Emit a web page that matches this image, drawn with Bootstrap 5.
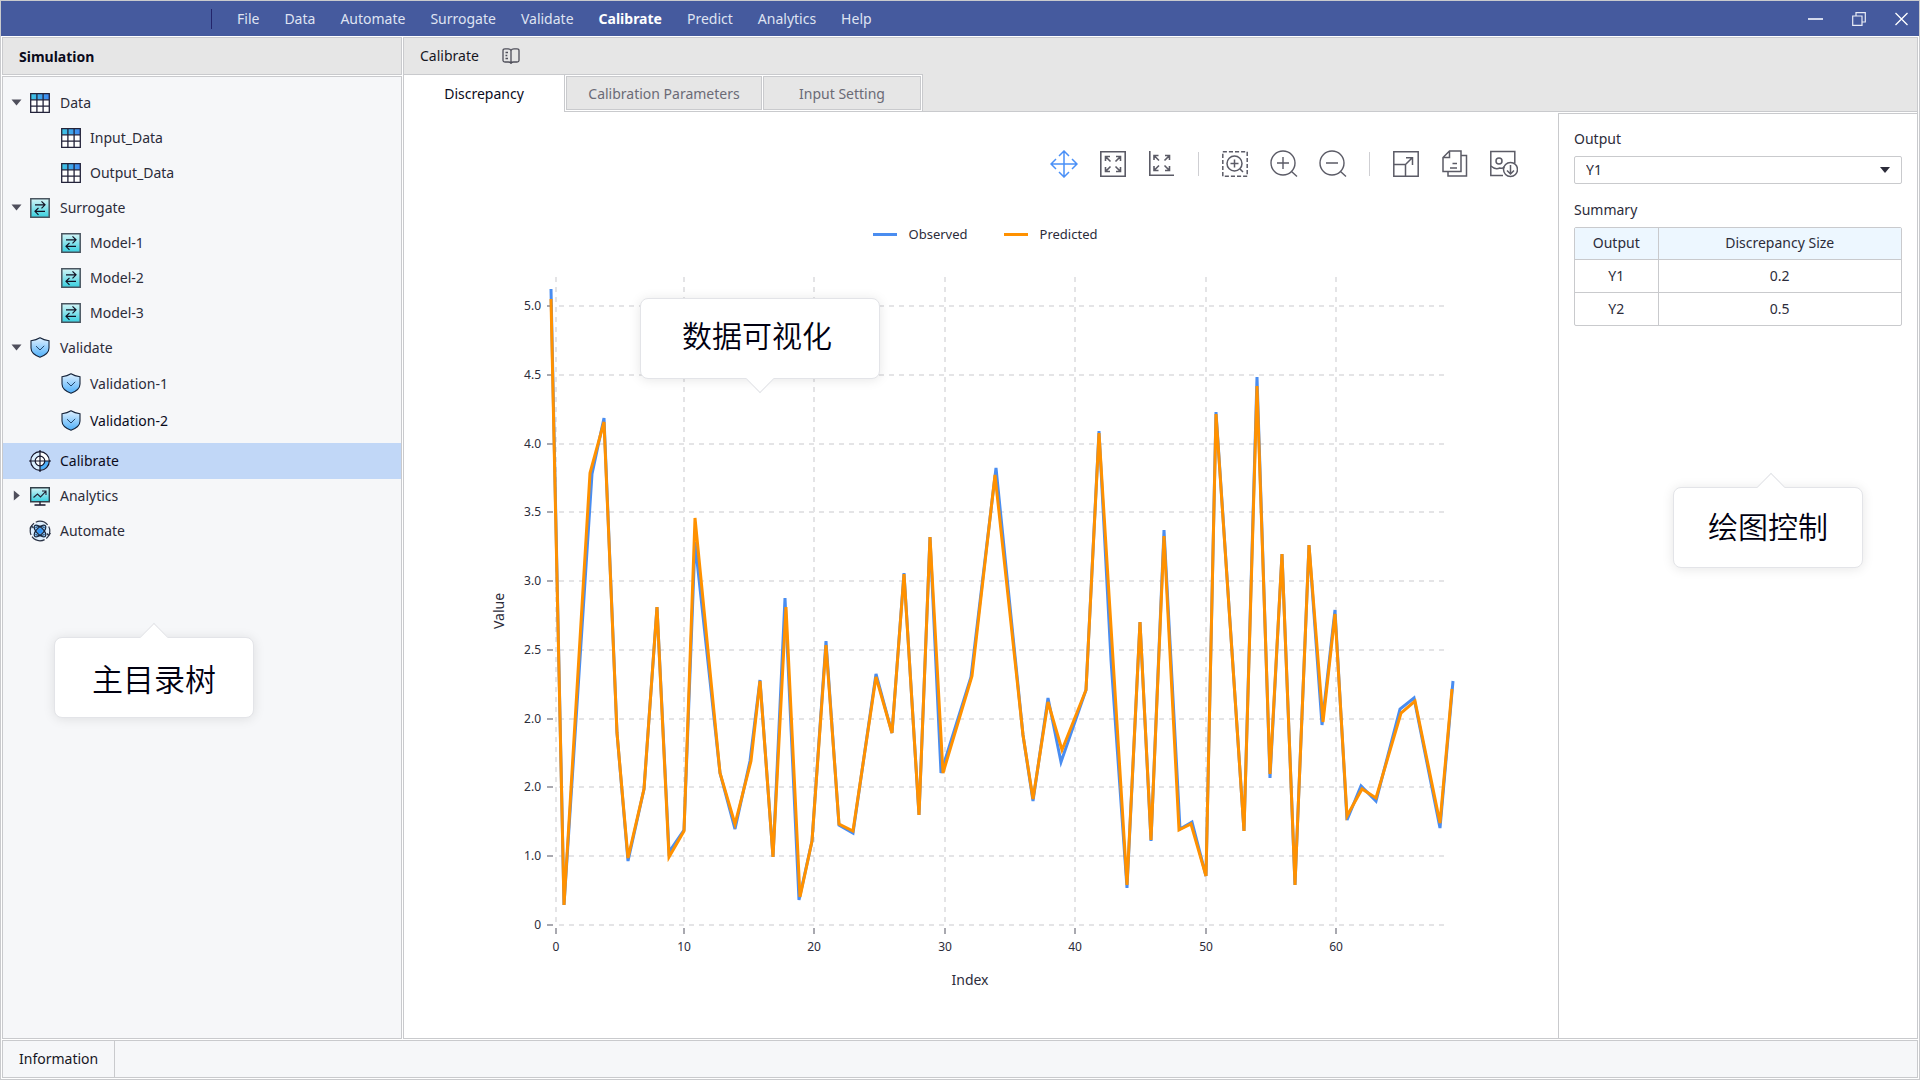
<!DOCTYPE html>
<html lang="en">
<head>
<meta charset="utf-8">
<meta name="viewport" content="width=device-width, initial-scale=1">
<title>Simulation - Calibrate</title>
<link href="https://cdn.jsdelivr.net/npm/bootstrap@5.3.0/dist/css/bootstrap.min.css" rel="stylesheet">
<style>
:root{--line:#c9cacd;--ink:#2c2c3a;--grey:#e6e6e6;--pale:#f6f7f9}
body{font-family:"Noto Sans","Open Sans","Noto Sans CJK SC",sans-serif;font-size:14px;line-height:22px;color:var(--ink);background:#fff}
button{font:inherit;color:inherit}
.app{border:1px solid var(--line)}
.line{border:1px solid var(--line)}
.titlebar{background:#455a9e;height:35px;padding-right:11px}
.brand{width:211px;height:20px;border-right:1px solid #23256b}
.menu{gap:25px;margin-left:25px}
.menu a{color:#dfe3f2;text-decoration:none}
.menu a.active{color:#fff;font-weight:700}
.winctl{gap:29px}
.winctl button,.tool,.book{background:none;border:0;padding:0;display:flex}
.workspace{padding:1px 1px 0;gap:1px}
.side{width:400px;gap:1px}
.side-head{height:38px;padding:2px 16px 0;background:var(--grey);font-weight:700;color:#0b0b1c}
.side-body{background:var(--pale);padding-top:8px}
.node{height:35px;padding-left:8px;color:var(--ink);text-decoration:none}
.node .arrow{width:11px;margin-right:8px}
.node .ico{margin-right:10px}
.node .ico-lg{margin:0 9px 0 -1px}
.node.leaf{padding-left:58px}
.node.leaf .ico{margin-right:9px}
.node.tall{height:37px}
.node.picked{height:36px;margin:4px 0 -1px;background:#c1d7f7;color:#0b0b1c}
.node.strong{color:#0b0b1c}
.main-head{height:36px;padding:0 16px;gap:23px;background:var(--grey);color:#16161f}
.tabstrip{background:var(--grey);height:38px}
.tab{border:1px solid var(--line);background:var(--grey);color:#6b6b76;padding:2px 0 0}
.tab-on{width:160px;border:0;border-top:1px solid var(--line);background:#fff;color:#0b0b1c;padding:0}
.tab-rest{background:#fff;border:1px solid var(--line);padding:1px;gap:1px}
.tab-a{width:196px}
.tab-b{width:158px}
.tab-fill{border-bottom:1px solid var(--line)}
.plot{padding-top:38px}
.tools{gap:21px;padding-right:40px;color:#5b5b66}
.tool-sep{width:1px;height:24px;margin:0 1px;background:#cfcfd3}
.legend-row{margin-top:46px;gap:36px;line-height:20px;font-size:13px;padding-left:8px}
.swatch{width:24px;height:3px;margin-right:12px}
.chart{width:100%;height:auto;display:block}
.chart text{fill:var(--ink);font-size:12px}
.chart .axis-name{font-size:14px}
.panel{width:359px;margin-top:1px;border-top:1px solid var(--line);border-left:1px solid var(--line);padding:14px 15px}
.panel .form-select{margin-top:6px;height:28px;padding:0 36px 0 11px;border:1px solid var(--line);border-radius:2px;font-size:14px;line-height:24px;color:var(--ink);background:#fff url("data:image/svg+xml,%3Csvg xmlns='http://www.w3.org/2000/svg' viewBox='0 0 10 6'%3E%3Cpath d='M0 0h10L5 6z' fill='%232c2c3a'/%3E%3C/svg%3E") no-repeat right 11px center/10px 6px}
.panel-title{margin:15px 0 6px}
.grid-wrap{border:1px solid var(--line);border-radius:2px}
.grid-wrap table{width:100%;text-align:center}
.grid-wrap th{background:#edf7ff;font-weight:400;height:31px}
.grid-wrap td{height:33px;border-top:1px solid var(--line)}
.grid-wrap th:first-child,.grid-wrap td:first-child{width:83px;border-right:1px solid var(--line)}
.footer-bar{height:38px;margin:1px;background:var(--pale);color:#16161f}
.footer-bar a{color:inherit;text-decoration:none;padding:0 16px;border-right:1px solid var(--line)}
.callout{position:absolute;height:81px;padding-bottom:5px;background:#fff;border:1px solid #e3e4e8;border-radius:8px;box-shadow:0 1px 12px rgba(0,0,0,.1);font-family:"Noto Sans CJK SC",sans-serif;font-weight:350;font-size:30px;line-height:40px;color:#000010}
.callout::before{content:"";position:absolute;width:20px;height:20px;left:calc(50% - 10px);background:#fff;transform:rotate(45deg);border:1px solid #e3e4e8}
.callout.up::before{top:-11px;border-width:1px 0 0 1px}
.callout.down::before{bottom:-11px;border-width:0 1px 1px 0}
.c-tree{left:51px;top:560px;width:200px;padding-bottom:0;font-size:31px}
.c-plot{left:236px;top:186px;width:240px;padding:0 6px 9px 0}
.c-panel{right:54px;top:373px;width:190px}
.c-panel::before{margin-left:3px}
</style>
</head>
<body>
<svg width="0" height="0" class="position-absolute" aria-hidden="true">
  <defs>
    <linearGradient id="gBlue"><stop offset="0" stop-color="#3fc8e4"/><stop offset="1" stop-color="#3f86f2"/></linearGradient>
    <linearGradient id="gTeal" x2="0" y2="1"><stop offset="0" stop-color="#d3f5f7"/><stop offset="1" stop-color="#38cfdf"/></linearGradient>
    <linearGradient id="gSky" x2="0" y2="1"><stop offset="0" stop-color="#dff0ff"/><stop offset="1" stop-color="#4fb0fa"/></linearGradient>
    <symbol id="i-table" viewBox="0 0 20 20"><path d="M.7.7h18.6v18.6H.7z" fill="#fff"/><path d="M.7.7h18.6v6H.7z" fill="url(#gBlue)"/><path d="M.7.7h18.6v18.6H.7zM.7 6.9h18.6M.7 13.1h18.6M6.9.7v18.6M13.1.7v18.6" fill="none" stroke="#23233a" stroke-width="1.3"/></symbol>
    <symbol id="i-swap" viewBox="0 0 20 20"><path d="M.8.8h18.4v18.4H.8z" fill="url(#gTeal)" stroke="#4a5560" stroke-width="1.5"/><path d="M5 6.800h10M11.500 3.300 15 6.800l-3.500 3.500M15 13.300H5M8.500 9.800 5 13.300l3.500 3.500" fill="none" stroke="#111122" stroke-width="1.2"/></symbol>
    <symbol id="i-shield" viewBox="0 0 20 20"><path d="M10 .3c2.700 1.700 5.600 2.500 9 2.900v7.300c0 4.500-3.700 7.300-9 9.200-5.300-1.900-9-4.700-9-9.200V3.200C4.400 2.800 7.300 2 10 .3z" fill="url(#gSky)" stroke="#15233a" stroke-width="1.1"/><path d="m6 8.600 4 3.900 4.200-4.200" fill="none" stroke="#24476e" stroke-width="1"/></symbol>
    <symbol id="i-target" viewBox="0 0 22 22"><circle cx="11" cy="11" r="9" fill="#d9eefe"/><path d="M11 11h9a9 9 0 0 1-9 9z" fill="#4fb0fa"/><path d="M11 2a9 9 0 0 1 9 9h-9z" fill="#fff"/><circle cx="11" cy="11" r="4.600" fill="#fff"/><g fill="none" stroke="#15152a" stroke-width="1.200"><circle cx="11" cy="11" r="9.300"/><circle cx="11" cy="11" r="4.800"/><path d="M11 0v22M0 11h22"/></g></symbol>
    <symbol id="i-monitor" viewBox="0 0 20 20"><path d="M.7 1.700h18.600v14H.7z" fill="url(#gTeal)" stroke="#33404a" stroke-width="1.400"/><path d="M3.500 11.500 7.500 8l3 3L16 5.200M12 5h4v4" fill="none" stroke="#223" stroke-width="1.100"/><path d="M10 15.700v3M4.500 19h11" stroke="#15152a" stroke-width="1.300"/></symbol>
    <symbol id="i-atom" viewBox="0 0 22 22"><circle cx="11" cy="11" r="9" fill="#dcefff"/><g fill="none" stroke="#2a3346" stroke-width="1.200"><circle cx="11" cy="11" r="9.800" stroke-dasharray="13.500 2 14 2 13 2 13 2.100" stroke-dashoffset="5"/><path d="M.8 8.500 2.500 6l2 2M21.500 13l-1.700 2.500-2-2"/></g><g fill="#8ecbff"><ellipse cx="11" cy="11" rx="7.500" ry="3.400" transform="rotate(45 11 11)"/><ellipse cx="11" cy="11" rx="7.500" ry="3.400" transform="rotate(-45 11 11)"/></g><path d="M6.500 7.500 Q11 4.500 15.500 7.500M6.500 14.500Q11 17.500 15.500 14.500" fill="none" stroke="#15233a" stroke-width=".9"/><circle cx="11" cy="11" r="2.800" fill="#2f93f5"/><g fill="none" stroke="#15233a" stroke-width="1.200"><ellipse cx="11" cy="11" rx="7.500" ry="3.400" transform="rotate(45 11 11)"/><ellipse cx="11" cy="11" rx="7.500" ry="3.400" transform="rotate(-45 11 11)"/></g></symbol>
    <symbol id="i-down" viewBox="0 0 11 11"><path d="M.5 2.500h10l-5 6z" fill="#4f4f5c"/></symbol>
    <symbol id="i-right" viewBox="0 0 11 11"><path d="M2.800.5v10l6-5z" fill="#4f4f5c"/></symbol>
  </defs>
</svg>

<div class="app min-vh-100 d-flex flex-column">
  <header class="titlebar d-flex align-items-center">
    <div class="brand"></div>
    <nav class="menu d-flex flex-grow-1">
      <a href="#">File</a><a href="#">Data</a><a href="#">Automate</a><a href="#">Surrogate</a><a href="#">Validate</a><a href="#" class="active">Calibrate</a><a href="#">Predict</a><a href="#">Analytics</a><a href="#">Help</a>
    </nav>
    <div class="winctl d-flex align-items-center">
      <button type="button" aria-label="Minimize"><svg width="15" height="14"><path d="M0 7h15" stroke="#d3d9ec" stroke-width="2"/></svg></button>
      <button type="button" aria-label="Restore"><svg width="14" height="14" fill="none" stroke="#e8ebf5" stroke-width="1.200"><path d="M.7 4h9.300v9.300H.7zM4 4V.7h9.300V10H10"/></svg></button>
      <button type="button" aria-label="Close"><svg width="13" height="14" stroke="#fff" stroke-width="1.300"><path d="m.5 1 12 12M12.500 1l-12 12"/></svg></button>
    </div>
  </header>

  <div class="workspace d-flex flex-grow-1">
    <aside class="side d-flex flex-column flex-shrink-0">
      <div class="side-head line d-flex align-items-center">Simulation</div>
      <nav class="side-body line flex-grow-1 position-relative">
        <a href="#" class="node d-flex align-items-center"><svg class="arrow" height="11"><use href="#i-down"/></svg><svg class="ico" width="20" height="20"><use href="#i-table"/></svg>Data</a>
        <a href="#" class="node leaf d-flex align-items-center"><svg class="ico" width="20" height="20"><use href="#i-table"/></svg>Input_Data</a>
        <a href="#" class="node leaf d-flex align-items-center"><svg class="ico" width="20" height="20"><use href="#i-table"/></svg>Output_Data</a>
        <a href="#" class="node d-flex align-items-center"><svg class="arrow" height="11"><use href="#i-down"/></svg><svg class="ico" width="20" height="20"><use href="#i-swap"/></svg>Surrogate</a>
        <a href="#" class="node leaf d-flex align-items-center"><svg class="ico" width="20" height="20"><use href="#i-swap"/></svg>Model-1</a>
        <a href="#" class="node leaf d-flex align-items-center"><svg class="ico" width="20" height="20"><use href="#i-swap"/></svg>Model-2</a>
        <a href="#" class="node leaf d-flex align-items-center"><svg class="ico" width="20" height="20"><use href="#i-swap"/></svg>Model-3</a>
        <a href="#" class="node d-flex align-items-center"><svg class="arrow" height="11"><use href="#i-down"/></svg><svg class="ico" width="20" height="21"><use href="#i-shield"/></svg>Validate</a>
        <a href="#" class="node leaf tall d-flex align-items-center"><svg class="ico" width="20" height="21"><use href="#i-shield"/></svg>Validation-1</a>
        <a href="#" class="node leaf tall strong d-flex align-items-center"><svg class="ico" width="20" height="21"><use href="#i-shield"/></svg>Validation-2</a>
        <a href="#" class="node picked d-flex align-items-center"><span class="arrow"></span><svg class="ico-lg" width="22" height="22"><use href="#i-target"/></svg>Calibrate</a>
        <a href="#" class="node d-flex align-items-center"><svg class="arrow" height="11"><use href="#i-right"/></svg><svg class="ico" width="20" height="20"><use href="#i-monitor"/></svg>Analytics</a>
        <a href="#" class="node d-flex align-items-center"><span class="arrow"></span><svg class="ico-lg" width="22" height="22"><use href="#i-atom"/></svg>Automate</a>
        <div class="callout up c-tree d-flex align-items-center justify-content-center">主目录树</div>
      </nav>
    </aside>

    <main class="line d-flex flex-column flex-grow-1">
      <div class="main-head d-flex align-items-center">Calibrate
        <button type="button" class="book" aria-label="Help book"><svg width="18" height="16" fill="none" stroke="#4f4f5a" stroke-width="1.300"><path d="M9 2.500C8.500 1.200 7.500.8 6 .8H3Q1 .8 1 2.800v9.700q0 1.500 2 1.500h3.500q1.500 0 2.500 1.200 1-1.200 2.500-1.200H15q2 0 2-1.500V2.800q0-2-2-2h-3c-1.500 0-2.500.4-3 1.700zM9 2.500V16M3.500 4.500H6M3.500 7.500h1.800M3.500 10.500H6"/></svg></button>
      </div>
      <div class="tabstrip d-flex" role="tablist">
        <button type="button" role="tab" aria-selected="true" class="tab-on">Discrepancy</button>
        <div class="tab-rest d-flex">
          <button type="button" role="tab" class="tab tab-a">Calibration Parameters</button>
          <button type="button" role="tab" class="tab tab-b">Input Setting</button>
        </div>
        <div class="tab-fill flex-grow-1"></div>
      </div>

      <div class="d-flex flex-grow-1">
        <section class="plot flex-grow-1 position-relative">
          <div class="tools d-flex align-items-center justify-content-end">
            <button type="button" class="tool" aria-label="Pan"><svg width="28" height="28" fill="none" stroke="#4a90f7" stroke-width="1.500"><path d="M14 1v26M1 14h26M9 6l5-5 5 5M9 22l5 5 5-5M6 9l-5 5 5 5M22 9l5 5-5 5"/></svg></button>
            <button type="button" class="tool" aria-label="Fit all"><svg width="28" height="28" fill="none" stroke="currentColor" stroke-width="1.600"><path d="M1.800 1.800h24.400v24.400H1.800z"/><path d="M11.500 11.500 6.500 6.500M6.500 11V6.500H11M16.500 11.500l5-5M17 6.500h4.500V11M11.500 16.500l-5 5M6.500 17v4.500H11M16.500 16.500l5 5M17 21.500h4.500V17"/></svg></button>
            <button type="button" class="tool" aria-label="Fit axes"><svg width="28" height="28" fill="none" stroke="currentColor" stroke-width="1.600"><path d="M1.800 1v24.200H26"/><path d="M11 10.500 6 5.500M6 10V5.500h4.500M16.500 10.500l5-5M17 5.500h4.500V10M11 15.500l-5 5M6 16v4.500h4.500M16.500 15.500l5 5M17 20.500h4.500V16"/></svg></button>
            <span class="tool-sep"></span>
            <button type="button" class="tool" aria-label="Zoom to selection"><svg width="28" height="28" fill="none" stroke="currentColor" stroke-width="1.500"><path d="M1.800 1.800h24.400v24.400H1.800z" stroke-dasharray="4.100 2"/><circle cx="13.500" cy="13.500" r="7.500"/><path d="M13.500 9.500v8M9.500 13.500h8M19 19l3 3"/></svg></button>
            <button type="button" class="tool" aria-label="Zoom in"><svg width="28" height="28" fill="none" stroke="currentColor" stroke-width="1.400"><circle cx="13" cy="13" r="12"/><path d="M13 7v12M7 13h12M21.500 21.500l5.500 5"/></svg></button>
            <button type="button" class="tool" aria-label="Zoom out"><svg width="28" height="28" fill="none" stroke="currentColor" stroke-width="1.400"><circle cx="13" cy="13" r="12"/><path d="M7 13h12M21.500 21.500l5.500 5"/></svg></button>
            <span class="tool-sep"></span>
            <button type="button" class="tool" aria-label="Resize"><svg width="28" height="28" fill="none" stroke="currentColor" stroke-width="1.500"><path d="M1.800 1.800h24.400v24.400H1.800zM1.800 14.500H13.500v11.700M13.500 14.500 20 8M14 7.800h6.500V15"/></svg></button>
            <button type="button" class="tool" aria-label="Copy"><svg width="28" height="28" fill="none" stroke="currentColor" stroke-width="1.500"><path d="M8.500 1H20v20.500H2V7.500zM8.500 1v6.500H2M20 5.500h5.500V26H7v-4.500M11.500 13.500H16M9 18h7"/></svg></button>
            <button type="button" class="tool" aria-label="Save image"><svg width="28" height="28" fill="none" stroke="currentColor" stroke-width="1.500"><path d="M13 25.500H.8V1.500h24v12"/><circle cx="9" cy="11" r="3"/><path d="M.8 16q4.500 4 9 2 3 1 4.500-1"/><circle cx="20.500" cy="19.500" r="7"/><path d="M20.500 15v8.500M17 20.500l3.500 3.500 3.500-3.500"/></svg></button>
          </div>

          <div class="legend-row d-flex justify-content-center">
            <div class="d-flex align-items-center"><span class="swatch" style="background:#4a8df0"></span>Observed</div>
            <div class="d-flex align-items-center"><span class="swatch" style="background:#ff9100"></span>Predicted</div>
          </div>

          <svg class="chart" viewBox="404 244 1154 770" role="img" aria-label="Observed and predicted value by index">
            <g fill="none" stroke="#e4e4e6" stroke-width="2" stroke-dasharray="5 5">
              <path d="M559 306H1444M559 375H1444M559 444H1444M559 512H1444M559 581H1444M559 650H1444M559 719H1444M559 787H1444M559 856H1444M559 925H1444"/>
              <path d="M556 277V923M684 277V923M814 277V923M945 277V923M1075 277V923M1206 277V923M1336 277V923"/>
            </g>
            <path fill="none" stroke="#a9a9b0" stroke-width="2" d="M547 306h6M547 375h6M547 444h6M547 512h6M547 581h6M547 650h6M547 719h6M547 787h6M547 856h6M547 925h6M556 928v6M684 928v6M814 928v6M945 928v6M1075 928v6M1206 928v6M1336 928v6"/>
            <g text-anchor="end">
              <text x="541" y="310">5.0</text><text x="541" y="379">4.5</text><text x="541" y="448">4.0</text><text x="541" y="516">3.5</text><text x="541" y="585">3.0</text><text x="541" y="654">2.5</text><text x="541" y="723">2.0</text><text x="541" y="791">2.0</text><text x="541" y="860">1.0</text><text x="541" y="929">0</text>
            </g>
            <g text-anchor="middle">
              <text x="556" y="951">0</text><text x="684" y="951">10</text><text x="814" y="951">20</text><text x="945" y="951">30</text><text x="1075" y="951">40</text><text x="1206" y="951">50</text><text x="1336" y="951">60</text>
              <text class="axis-name" x="970" y="985">Index</text>
              <text class="axis-name" transform="translate(504 611) rotate(-90)">Value</text>
            </g>
            <polyline fill="none" stroke="#4a8df0" stroke-width="3" points="551,289 564,905 592,474 604,418 617,733 628,861 644,789 657,607 669,852 684,830 695,542 720,773 735,829 750,761 760,680 773,857 785,598 799,900 812,841 826,641 839,825 853,833 876,674 892,733 904,573 919,815 930,537 941,773 971,677 996,468 1023,735 1033,801 1048,698 1061,762 1086,690 1099,431 1111,660 1127,888 1140,622 1151,841 1164,530 1180,829 1192,822 1206,876 1216,412 1244,831 1257,377 1270,778 1282,554 1295,885 1309,545 1322,725 1335,610 1347,820 1361,786 1376,801 1400,709 1414,698 1440,828 1453,681"/>
            <polyline fill="none" stroke="#ff9100" stroke-width="3" points="551,299 564,905 590,473 604,422 617,733 628,858 644,789 657,607 669,857 684,831 695,518 720,773 735,824 751,761 760,681 773,857 786,607 800,897 812,841 826,645 839,824 853,831 876,677 892,733 904,574 919,815 930,537 943,773 972,676 995,475 1023,735 1033,799 1048,702 1062,750 1086,690 1099,433 1127,885 1140,622 1151,840 1164,536 1179,830 1191,824 1206,876 1216,414 1244,831 1257,386 1270,774 1282,554 1295,885 1309,545 1323,722 1335,614 1347,816 1362,789 1376,798 1401,713 1415,701 1440,823 1452,689"/>
          </svg>
          <div class="callout down c-plot d-flex align-items-center justify-content-center">数据可视化</div>
        </section>

        <section class="panel flex-shrink-0 position-relative">
          <label for="output" class="d-block">Output</label>
          <select id="output" class="form-select"><option>Y1</option><option>Y2</option></select>
          <div class="panel-title">Summary</div>
          <div class="grid-wrap">
            <table>
              <thead><tr><th scope="col">Output</th><th scope="col">Discrepancy Size</th></tr></thead>
              <tbody><tr><td>Y1</td><td>0.2</td></tr><tr><td>Y2</td><td>0.5</td></tr></tbody>
            </table>
          </div>
          <div class="callout up c-panel d-flex align-items-center justify-content-center">绘图控制</div>
        </section>
      </div>
    </main>
  </div>

  <footer class="footer-bar line d-flex">
    <a href="#" class="d-flex align-items-center">Information</a>
  </footer>
</div>
<script src="https://cdn.jsdelivr.net/npm/bootstrap@5.3.0/dist/js/bootstrap.bundle.min.js"></script>
</body>
</html>
